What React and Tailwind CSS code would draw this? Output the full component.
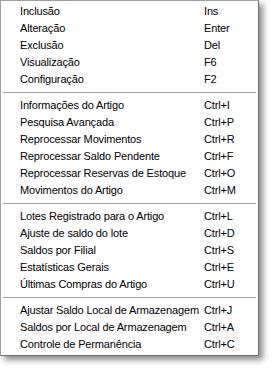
import React from "react";

const groups = [
  [
    ["Inclusão", "Ins"],
    ["Alteração", "Enter"],
    ["Exclusão", "Del"],
    ["Visualização", "F6"],
    ["Configuração", "F2"],
  ],
  [
    ["Informações do Artigo", "Ctrl+I"],
    ["Pesquisa Avançada", "Ctrl+P"],
    ["Reprocessar Movimentos", "Ctrl+R"],
    ["Reprocessar Saldo Pendente", "Ctrl+F"],
    ["Reprocessar Reservas de Estoque", "Ctrl+O"],
    ["Movimentos do Artigo", "Ctrl+M"],
  ],
  [
    ["Lotes Registrado para o Artigo", "Ctrl+L"],
    ["Ajuste de saldo do lote", "Ctrl+D"],
    ["Saldos por Filial", "Ctrl+S"],
    ["Estatísticas Gerais", "Ctrl+E"],
    ["Últimas Compras do Artigo", "Ctrl+U"],
  ],
  [
    ["Ajustar Saldo Local de Armazenagem", "Ctrl+J"],
    ["Saldos por Local de Armazenagem", "Ctrl+A"],
    ["Controle de Permanência", "Ctrl+C"],
  ],
];

export default function App() {
  return (
    <div className="w-[272px] h-[368px] bg-white">
      <div
        className="w-[259px] h-[356px] bg-white border border-[#a0a0a0] border-r-[#6e6e6e] border-b-[#6e6e6e] shadow-[4px_4px_6px_rgba(0,0,0,0.45)] pt-[2px] text-[11px] tracking-[-0.15px] text-black"
        style={{ fontFamily: '"Liberation Sans", Arial, sans-serif' }}
      >
        {groups.map((g, gi) => (
          <div key={gi}>
            {gi > 0 && (
              <div className="h-[9px] flex items-center px-[2px]">
                <div className="h-px w-full bg-[#a0a0a0]" />
              </div>
            )}
            {g.map(([label, sc]) => (
              <div key={label} className="h-[17px] flex items-center pl-[19px] whitespace-nowrap">
                <span className="flex-1">{label}</span>
                <span className="w-[54px]">{sc}</span>
              </div>
            ))}
          </div>
        ))}
      </div>
    </div>
  );
}
